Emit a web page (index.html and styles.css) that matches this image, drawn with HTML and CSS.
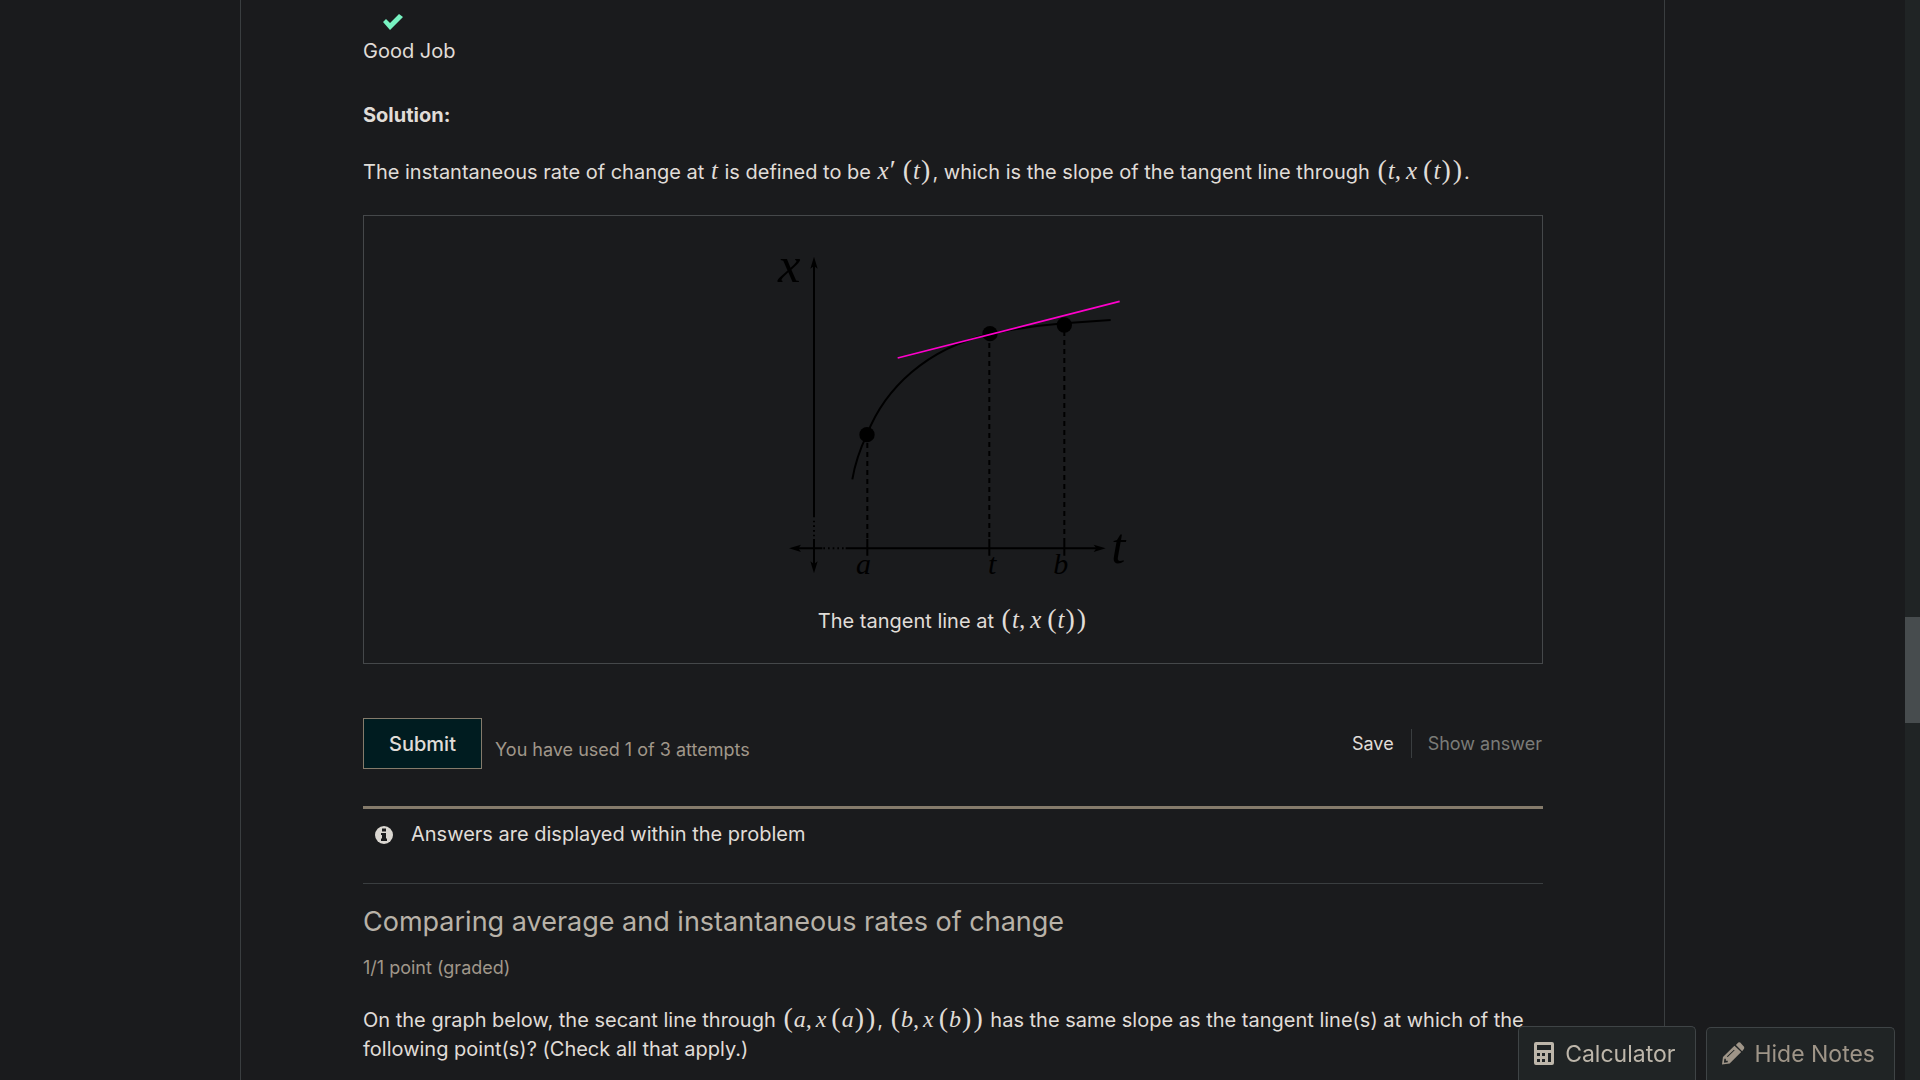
FILE: index.html
```html
<!DOCTYPE html>
<html lang="en">
<head>
<meta charset="utf-8">
<title>Rates of change</title>
<link rel="stylesheet" href="styles.css">
</head>
<body>
<main class="course">
  <section class="problem">
    <div class="feedback">
      <svg class="check" viewBox="0 0 22 16" aria-label="Correct"><path d="M1 8 L4 5 L8 9 L17 0 L21 3 L8 16 Z"/></svg>
      <p>Good Job</p>
    </div>
    <p class="label"><strong>Solution:</strong></p>
    <p class="statement">The instantaneous rate of change at <span class="math">t</span> is defined to be <span class="math">x<b>′</b><span class="gap"></span><b>(</b>t<b>)</b></span>, which is the slope of the tangent line through <span class="math"><b>(</b>t,<span class="gap"></span>x<span class="gap"></span><b>(</b>t<b>)</b><b>)</b></span>.</p>
    <figure class="figure">
      <svg class="graph" viewBox="0 0 1158 1050" role="img" aria-label="Tangent line graph">
        <g class="ink">
          <path d="M162 75V832M162 897V975M112 925H187M257 925H1010M322 897V947M688 897V947M913 897V947"/>
          <path class="dots" d="M162 842V897M190 925H255"/>
          <path class="dash" d="M322 609V897M688 309V897M913 273V897"/>
          <path d="M277 718C285 670 301 625 321 583C375 445 500 325 690 282C760 267 840 256 913 250L1052 240"/>
        </g>
        <g class="solid">
          <path d="M162 50L173 86L162 78L151 86ZM162 1000L173 964L162 972L151 964ZM87 925L123 914L115 925L123 936ZM1037 925L1001 914L1009 925L1001 936Z"/>
          <circle cx="321" cy="584" r="23"/><circle cx="690" cy="281" r="23"/><circle cx="913" cy="255" r="23"/>
        </g>
        <path class="tangent" d="M413 354L1079 184"/>
        <g class="names">
          <text x="54" y="125" class="axis">x</text>
          <text x="1054" y="970" class="axis">t</text>
          <text x="288" y="1002">a</text>
          <text x="684" y="1002">t</text>
          <text x="880" y="1002">b</text>
        </g>
      </svg>
      <figcaption>The tangent line at <span class="math"><b>(</b>t,<span class="gap"></span>x<span class="gap"></span><b>(</b>t<b>)</b><b>)</b></span></figcaption>
    </figure>
    <div class="actions">
      <button class="submit" type="button">Submit</button>
      <span class="attempts">You have used 1 of 3 attempts</span>
      <div class="links">
        <button type="button" class="save">Save</button>
        <button type="button" class="show" disabled>Show answer</button>
      </div>
    </div>
    <div class="notice">
      <svg viewBox="0 0 18 18" aria-hidden="true"><circle cx="9" cy="9" r="9"/><path d="M7 2.500h4v3H7zM6 7h5v5.500h1V15H6v-2.500h1V9H6z"/></svg>
      <span>Answers are displayed within the problem</span>
    </div>
  </section>
  <section class="problem next">
    <h3>Comparing average and instantaneous rates of change</h3>
    <p class="points">1/1 point (graded)</p>
    <p class="question">On the graph below, the secant line through <span class="math"><b>(</b>a,<span class="gap"></span>x<span class="gap"></span><b>(</b>a<b>)</b><b>)</b></span>, <span class="math"><b>(</b>b,<span class="gap"></span>x<span class="gap"></span><b>(</b>b<b>)</b><b>)</b></span> has the same slope as the tangent line(s) at which of the following point(s)? (Check all that apply.)</p>
  </section>
</main>
<div class="tools">
  <button type="button" class="calculator">
    <svg viewBox="0 0 20 24" aria-hidden="true"><path fill-rule="evenodd" d="M2 0h16q2 0 2 2v19q0 2-2 2H2q-2 0-2-2V2Q0 0 2 0zM3 3v5h14V3zM3 11v3h3v-3zM8 11v3h3v-3zM14 11v9h3v-9zM3 17v3h3v-3zM8 17v3h3v-3z"/></svg>Calculator</button>
  <button type="button" class="notes">
    <svg viewBox="0 0 24 24" aria-hidden="true"><path fill-rule="evenodd" d="M0 23L1 15L13 3.500L20 10L8 22ZM14.500 2.500L17 0Q18 -.5 19 0L23 4.500Q23.500 5.500 23 6.500L21 9ZM2.500 17L2 21L6 20.500L6 19L4 19L4 17ZM5 14.500L12.500 7.500L13.200 8.200L6 15Z"/></svg>Hide Notes</button>
</div>
<div class="scrollbar" aria-hidden="true"><div class="thumb"></div></div>
</body>
</html>
```
FILE: styles.css
```css
* { box-sizing: border-box; }
body {
  margin: 0;
  background: #1a1b1d;
  color: #e0ddd8;
  font: 20px/29px Inter, "Noto Sans", sans-serif;
  height: 100vh;
  overflow: hidden;
}
p, h3, figure { margin: 0; }
button { font-family: inherit; margin: 0; }
.course {
  margin: 0 255px 0 240px;
  padding: 0 121px 0 122px;
  min-height: 100vh;
  border: solid #3a3e40;
  border-width: 0 1px;
}
.feedback { padding-top: 14px; }
.check { display: block; width: 22px; height: 16px; margin-left: 19px; fill: #77f2c1; }
.feedback p { margin-top: 7px; }
.label { margin-top: 35px; }
.statement { margin-top: 28px; }
.math {
  margin: 0 1px;
  font-family: "Liberation Serif", serif;
  font-style: italic;
  font-size: 25px;
  line-height: 20px;
  white-space: nowrap;
}
.math b { padding: 0 1px; font-weight: normal; font-style: normal; font-size: 28px; }
.question .math { font-size: 24px; }
.question .gap { width: 4px; }
.gap { display: inline-block; width: 5px; }
.figure {
  margin-top: 28px;
  padding: 24px 0 20px;
  height: 449px;
  border: 1px solid #45484a;
  display: flex;
  flex-direction: column;
  align-items: center;
}
.graph { width: 386px; height: 350px; flex: none; overflow: visible; }
.ink { fill: none; stroke: #000; stroke-width: 6; }
.dots { stroke-dasharray: 5 9; }
.dash { stroke-dasharray: 15 12; }
.solid { fill: #000; }
.tangent { stroke: #f0c; stroke-width: 5; }
.names { font: italic 90px "Liberation Serif", serif; fill: #000; }
.axis { font-size: 152px; }
figcaption { margin-top: 17px; }
.actions { display: flex; margin-top: 54px; align-items: center; }
.submit {
  width: 119px;
  height: 51px;
  border: 1px solid #857b6b;
  background: #001c20;
  color: #e0ddd8;
  font-size: 20px;
  font-weight: 500;
}
.attempts { margin: 12px 0 0 13px; font-size: 18px; color: #a0978a; }
.links { margin-left: auto; display: flex; }
.links button { border: 0; background: none; padding: 0 1px 0 16px; font-size: 18px; line-height: 29px; color: #e0ddd8; }
.links .save { padding-right: 17px; border-right: 1px solid #3a3e40; }
.links .show { color: #7b7b78; }
.notice { display: flex; align-items: center; gap: 18px; margin-top: 37px; padding: 11px 12px 34px; border-top: 3px solid #857b6b; }
.notice svg { width: 18px; height: 18px; fill: #dad7d1; }
.notice path { fill: #1a1b1d; }
.next { border-top: 1px solid #3a3e40; padding-top: 20px; }
h3 { font-size: 27px; line-height: 36px; font-weight: 400; color: #b8b2a8; }
.points { font-size: 18px; margin-top: 13px; color: #a0978a; }
.question { margin-top: 24px; }
.tools { position: fixed; right: 25px; bottom: 0; display: flex; gap: 10px; align-items: flex-end; }
.tools button {
  display: flex;
  align-items: center;
  gap: 11px;
  height: 54px;
  padding: 0 20px 0 15px;
  border: 1px solid #3f4446;
  border-bottom: 0;
  border-radius: 5px 5px 0 0;
  background: #202425;
  color: #bdb6aa;
  font-size: 23px;
  font-weight: 400;
}
.tools svg { width: 20px; height: 24px; fill: currentColor; }
.tools .notes { height: 53px; padding-right: 19px; color: #9f9588; gap: 9px; }
.tools .notes svg { width: 23px; }
.scrollbar { position: fixed; top: 0; right: 0; bottom: 0; width: 15px; background: #202425; }
.thumb { margin-top: 617px; height: 106px; background: #474c4e; }
```
